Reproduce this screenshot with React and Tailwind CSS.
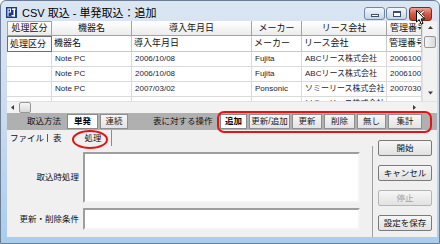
import React from 'react';

// column widths of the visible part of the grid
const COLS = 'grid grid-cols-[45px_80px_120px_50px_85px_35px]';
const FONT = "font-['Liberation_Sans','Noto_Sans_CJK_JP',sans-serif]";

const headers = ['処理区分', '機器名', '導入年月日', 'メーカー', 'リース会社', '管理番号'];

const rows = [
  ['', 'Note PC', '2006/10/08', 'Fujita', 'ABCリース株式会社', '20061001'],
  ['', 'Note PC', '2006/10/08', 'Fujita', 'ABCリース株式会社', '20061002'],
  ['', 'Note PC', '2007/03/02', 'Ponsonic', 'ソミーリース株式会社', '20070301'],
  ['', 'Note PC', '2007/03/02', 'Ponsonic', 'ソミーリース株式会社', '20070302'],
];

const Logo = () => (
  <svg width="11" height="11" viewBox="0 0 11 11">
    <rect width="11" height="11" fill="#1b3b8f" />
    <rect x="1.5" y="1.5" width="3.5" height="8" fill="#fff" />
    <rect x="2.5" y="2.5" width="1.5" height="2" fill="#1b3b8f" />
    <rect x="2.5" y="5.5" width="2.5" height="4" fill="#1b3b8f" />
    <rect x="6" y="1.5" width="3.5" height="1.5" fill="#fff" />
    <rect x="7.5" y="1.5" width="1.5" height="8" fill="#fff" />
    <rect x="5.5" y="8" width="3.5" height="1.5" fill="#fff" />
  </svg>
);

const Arrow = ({ dir }) => {
  const d = {
    up: 'M1 4 L3.5 1 L6 4 Z',
    down: 'M1 1.5 L6 1.5 L3.5 4.5 Z',
    left: 'M4 1 L1 3.5 L4 6 Z',
    right: 'M2 1 L5 3.5 L2 6 Z',
  }[dir];
  return (
    <svg width="7" height="7" viewBox="0 0 7 7">
      <path d={d} fill="#3c3c3c" />
    </svg>
  );
};

const ToolButton = ({ children, w, active }) => (
  <div
    className={`${w} h-[15px] flex items-center justify-center border text-[8.5px] leading-none whitespace-nowrap ${
      active
        ? 'bg-white border-[#8a8a8a] font-bold text-black'
        : 'bg-gradient-to-b from-[#f7f7f7] to-[#e3e3e3] border-[#8f8f8f] text-[#1a1a1a]'
    }`}
  >
    {children}
  </div>
);

const SideButton = ({ children, disabled }) => (
  <div
    className={`w-[54px] h-[16px] flex items-center justify-center rounded-[2px] border border-[#7a7a7a] bg-gradient-to-b from-[#f6f6f6] to-[#e2e2e2] text-[8.5px] leading-none ${
      disabled ? 'text-[#a3a3a3] border-[#b5b5b5]' : 'text-[#111]'
    }`}
  >
    {children}
  </div>
);

const DataRow = ({ cells }) => (
  <div className={`${COLS} h-[15px] shrink-0`}>
    {cells.map((c, i) => (
      <div
        key={i}
        className="flex items-center overflow-hidden whitespace-nowrap pl-[3px] border-r border-b border-[#dadada] text-[8px] leading-none text-[#1c1c2e]"
      >
        {c}
      </div>
    ))}
  </div>
);

export default function App() {
  return (
    <div
      className={`${FONT} relative w-[440px] h-[244px] overflow-hidden flex flex-col border border-[#6b7e96] rounded-t-[6px] bg-gradient-to-b from-[#dbe6f3] via-[#c9daed] to-[#a9cdee]`}
    >
      {/* Title bar */}
      <div className="h-[20px] flex items-start shrink-0">
        <div className="ml-[5px] mt-[6px]">
          <Logo />
        </div>
        <span className="ml-[5px] mt-[6px] text-[11px] leading-[13px] text-black whitespace-nowrap">
          CSV 取込 - 単発取込：追加
        </span>
        <div className="ml-auto mr-[7px] mt-[6px] flex gap-[1px]">
          <div className="w-[21px] h-[13px] rounded-[3px] border border-[#7187a3] bg-gradient-to-b from-[#f3f7fc] to-[#c6d5e7] flex items-end justify-center pb-[2px]">
            <div className="w-[8px] h-[3px] bg-white border border-[#3e4e63]" />
          </div>
          <div className="w-[21px] h-[13px] rounded-[3px] border border-[#7187a3] bg-gradient-to-b from-[#f3f7fc] to-[#c6d5e7] flex items-center justify-center">
            <div className="w-[8px] h-[6px] bg-white border border-[#3e4e63] border-t-2" />
          </div>
          <div className="ml-[1px] w-[23px] h-[14px] rounded-[3px] border border-[#7a2c22] bg-gradient-to-b from-[#eba394] via-[#d55842] to-[#c13a25] flex items-center justify-center">
            <svg width="9" height="8" viewBox="0 0 9 8">
              <path d="M1 1 L8 7 M8 1 L1 7" stroke="#3d1510" strokeWidth="2.6" />
              <path d="M1 1 L8 7 M8 1 L1 7" stroke="#fff" strokeWidth="1.6" />
            </svg>
          </div>
        </div>
      </div>

      {/* Client area */}
      <div className="flex-1 ml-[6px] mr-[2px] mb-[6px] bg-[#f0f0f0] flex flex-col overflow-hidden">
        {/* Grid */}
        <div className="flex h-[80px] shrink-0">
          <div className="w-[415px] bg-white overflow-hidden flex flex-col">
            <div className={`${COLS} h-[15px] shrink-0`}>
              {headers.map((h, i) => (
                <div
                  key={i}
                  className={`flex items-center overflow-hidden whitespace-nowrap border-r border-b border-[#a3a3a3] bg-gradient-to-b from-white to-[#ececec] text-[9px] leading-none text-[#111] ${
                    i === 5 ? 'pl-[3px]' : 'justify-center'
                  } ${i === 0 ? 'border-l border-t border-[#6f6f6f]' : ''}`}
                >
                  {h}
                </div>
              ))}
            </div>
            <div className={`${COLS} h-[16px] shrink-0`}>
              {headers.map((h, i) => (
                <div
                  key={i}
                  className={`flex items-center overflow-hidden whitespace-nowrap pl-[2px] text-[9px] leading-none text-[#111] ${
                    i === 0
                      ? 'border border-[#6f6f6f] bg-[#fafafa]'
                      : 'border-r border-b border-[#c9c9c9]'
                  }`}
                >
                  {h}
                </div>
              ))}
            </div>
            {rows.slice(0, 3).map((r, i) => (
              <DataRow key={i} cells={r} />
            ))}
            <div className="h-[4px] overflow-hidden shrink-0">
              <DataRow cells={rows[3]} />
            </div>
          </div>
          {/* Vertical scrollbar */}
          <div className="w-[15px] bg-[#f2f2f2] border-l border-[#e2e2e2] flex flex-col items-center">
            <div className="h-[15px] flex items-center justify-center">
              <Arrow dir="up" />
            </div>
            <div className="w-[12px] h-[12px] rounded-[2px] border border-[#979797] bg-gradient-to-r from-[#f6f6f6] to-[#d9d9d9]" />
            <div className="flex-1" />
            <div className="h-[15px] flex items-center justify-center">
              <Arrow dir="down" />
            </div>
          </div>
        </div>

        {/* Horizontal scrollbar */}
        <div className="flex h-[12px] shrink-0 bg-[#f2f2f2] border-t border-[#e2e2e2]">
          <div className="w-[12px] flex items-center justify-center">
            <Arrow dir="left" />
          </div>
          <div className="w-[12px] h-[11px] rounded-[2px] border border-[#979797] bg-gradient-to-b from-[#f6f6f6] to-[#d9d9d9]" />
          <div className="flex-1" />
          <div className="w-[15px] flex items-center justify-center">
            <Arrow dir="right" />
          </div>
          <div className="w-[15px] bg-[#f0f0f0]" />
        </div>

        {/* Toolbar */}
        <div className="h-[17px] shrink-0 flex items-center bg-[#b0b0b0] text-[8.5px] leading-none text-[#111]">
          <span className="ml-[20px] w-[40px] whitespace-nowrap">取込方法</span>
          <ToolButton w="w-[31px]" active>
            単発
          </ToolButton>
          <div className="ml-[2px]">
            <ToolButton w="w-[28px]">連続</ToolButton>
          </div>
          <span className="ml-[25px] w-[67px] whitespace-nowrap">表に対する操作</span>
          <div className="flex gap-[2px]">
            <ToolButton w="w-[27px]" active>
              追加
            </ToolButton>
            <ToolButton w="w-[41px]">更新/追加</ToolButton>
            <ToolButton w="w-[30px]">更新</ToolButton>
            <ToolButton w="w-[31px]">削除</ToolButton>
            <ToolButton w="w-[29px]">無し</ToolButton>
            <ToolButton w="w-[34px]">集計</ToolButton>
          </div>
        </div>

        {/* Lower part */}
        <div className="flex-1 flex">
          <div className="w-[366px] flex flex-col">
            <div className="h-[16px] flex items-center text-[8.5px] leading-none text-[#111]">
              <span className="ml-[3px] pr-[3px] border-r border-[#5a5a5a] whitespace-nowrap">ファイル</span>
              <span className="ml-[5px] whitespace-nowrap">表</span>
              <span className="ml-[14px] w-[36px] h-[16px] flex items-center justify-center border-r border-[#8c8c8c] whitespace-nowrap">
                処理
              </span>
            </div>
            <div className="flex-1 border-r border-[#a0a0a0] pt-[6px] flex flex-col gap-[5px] text-[8.5px] leading-none text-[#111]">
              <div className="flex items-center">
                <span className="w-[72px] text-right whitespace-nowrap">取込時処理</span>
                <div className="ml-[4px] w-[277px] h-[51px] bg-white border-2 border-t-[#9e9e9e] border-l-[#9e9e9e] border-b-[#f4f4f4] border-r-[#f4f4f4]" />
              </div>
              <div className="flex items-center">
                <span className="w-[72px] text-right whitespace-nowrap">更新・削除条件</span>
                <div className="ml-[4px] w-[277px] h-[22px] bg-white border-2 border-t-[#9e9e9e] border-l-[#9e9e9e] border-b-[#f4f4f4] border-r-[#f4f4f4]" />
              </div>
            </div>
          </div>
          <div className="flex-1 pl-[5px] pt-[10px] flex flex-col gap-[9px]">
            <SideButton>開始</SideButton>
            <SideButton>キャンセル</SideButton>
            <SideButton disabled>停止</SideButton>
            <SideButton>設定を保存</SideButton>
          </div>
        </div>
      </div>

      {/* Red annotations */}
      <div className="absolute left-[216px] top-[110px] w-[215px] h-[22px] border-2 border-[#e31414] rounded-[7px] pointer-events-none" />
      <div className="absolute left-[71px] top-[129px] w-[36px] h-[19px] border-2 border-[#e31414] rounded-[50%] pointer-events-none" />

      {/* Mouse cursor over close button */}
      <svg className="absolute left-[415px] top-[9px]" width="10" height="16" viewBox="0 0 10 16">
        <path d="M0.5 0.5 L0.5 12 L3.2 9.6 L5.2 14.2 L7 13.4 L5.1 8.9 L8.6 8.9 Z" fill="#fff" stroke="#000" strokeWidth="1" />
      </svg>
    </div>
  );
}
